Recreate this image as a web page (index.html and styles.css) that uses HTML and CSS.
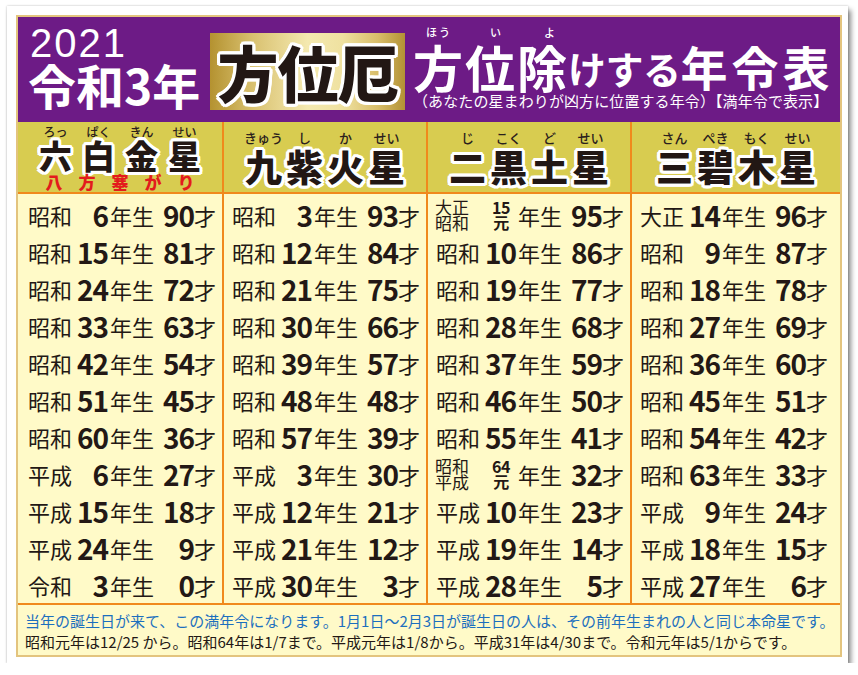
FILE: index.html
```html
<!DOCTYPE html>
<html lang="ja">
<head>
<meta charset="utf-8">
<title>2021 令和3年 方位厄 方位除けする年令表</title>
<link rel="stylesheet" href="styles.css">
</head>
<body>
<div class="card">
  <div class="panel">
    <header class="hd">
      <div class="hd-year">
        <div class="y2021">2021</div>
        <div class="reiwa">令和3年</div>
      </div>
      <div class="gold"><span class="gold-text">方位厄</span></div>
      <div class="hd-title">
        <div class="title-ruby">
          <span class="tr tr1">ほう</span><span class="tr tr2">い</span><span class="tr tr3">よ</span>
        </div>
        <div class="title">
          <span class="t-big">方位除</span><span class="t-kana">けする</span><span class="t-end">年令表</span>
        </div>
        <div class="sub">（あなたの星まわりが凶方に位置する年令）【満年令で表示】</div>
      </div>
    </header>

    <div class="grid">
      <div class="col c1">
        <div class="colhead ch1">
          <div class="name name1">
            <span class="u"><span class="rt">ろっ</span><span class="k">六</span></span>
            <span class="u"><span class="rt">ぱく</span><span class="k">白</span></span>
            <span class="u"><span class="rt">きん</span><span class="k">金</span></span>
            <span class="u"><span class="rt">せい</span><span class="k">星</span></span>
          </div>
          <div class="happo">八方塞がり</div>
        </div>
        <div class="rows">
          <div class="row"><span class="era">昭和</span><span class="num">6</span><span class="nen">年生</span><span class="age">90</span><span class="sai">才</span></div>
          <div class="row"><span class="era">昭和</span><span class="num">15</span><span class="nen">年生</span><span class="age">81</span><span class="sai">才</span></div>
          <div class="row"><span class="era">昭和</span><span class="num">24</span><span class="nen">年生</span><span class="age">72</span><span class="sai">才</span></div>
          <div class="row"><span class="era">昭和</span><span class="num">33</span><span class="nen">年生</span><span class="age">63</span><span class="sai">才</span></div>
          <div class="row"><span class="era">昭和</span><span class="num">42</span><span class="nen">年生</span><span class="age">54</span><span class="sai">才</span></div>
          <div class="row"><span class="era">昭和</span><span class="num">51</span><span class="nen">年生</span><span class="age">45</span><span class="sai">才</span></div>
          <div class="row"><span class="era">昭和</span><span class="num">60</span><span class="nen">年生</span><span class="age">36</span><span class="sai">才</span></div>
          <div class="row"><span class="era">平成</span><span class="num">6</span><span class="nen">年生</span><span class="age">27</span><span class="sai">才</span></div>
          <div class="row"><span class="era">平成</span><span class="num">15</span><span class="nen">年生</span><span class="age">18</span><span class="sai">才</span></div>
          <div class="row"><span class="era">平成</span><span class="num">24</span><span class="nen">年生</span><span class="age">9</span><span class="sai">才</span></div>
          <div class="row"><span class="era">令和</span><span class="num">3</span><span class="nen">年生</span><span class="age">0</span><span class="sai">才</span></div>
        </div>
      </div>

      <div class="col">
        <div class="colhead">
          <div class="name">
            <span class="u"><span class="rt">きゅう</span><span class="k">九</span></span>
            <span class="u"><span class="rt">し</span><span class="k">紫</span></span>
            <span class="u"><span class="rt">か</span><span class="k">火</span></span>
            <span class="u"><span class="rt">せい</span><span class="k">星</span></span>
          </div>
        </div>
        <div class="rows">
          <div class="row"><span class="era">昭和</span><span class="num">3</span><span class="nen">年生</span><span class="age">93</span><span class="sai">才</span></div>
          <div class="row"><span class="era">昭和</span><span class="num">12</span><span class="nen">年生</span><span class="age">84</span><span class="sai">才</span></div>
          <div class="row"><span class="era">昭和</span><span class="num">21</span><span class="nen">年生</span><span class="age">75</span><span class="sai">才</span></div>
          <div class="row"><span class="era">昭和</span><span class="num">30</span><span class="nen">年生</span><span class="age">66</span><span class="sai">才</span></div>
          <div class="row"><span class="era">昭和</span><span class="num">39</span><span class="nen">年生</span><span class="age">57</span><span class="sai">才</span></div>
          <div class="row"><span class="era">昭和</span><span class="num">48</span><span class="nen">年生</span><span class="age">48</span><span class="sai">才</span></div>
          <div class="row"><span class="era">昭和</span><span class="num">57</span><span class="nen">年生</span><span class="age">39</span><span class="sai">才</span></div>
          <div class="row"><span class="era">平成</span><span class="num">3</span><span class="nen">年生</span><span class="age">30</span><span class="sai">才</span></div>
          <div class="row"><span class="era">平成</span><span class="num">12</span><span class="nen">年生</span><span class="age">21</span><span class="sai">才</span></div>
          <div class="row"><span class="era">平成</span><span class="num">21</span><span class="nen">年生</span><span class="age">12</span><span class="sai">才</span></div>
          <div class="row"><span class="era">平成</span><span class="num">30</span><span class="nen">年生</span><span class="age">3</span><span class="sai">才</span></div>
        </div>
      </div>

      <div class="col">
        <div class="colhead">
          <div class="name">
            <span class="u"><span class="rt">じ</span><span class="k">二</span></span>
            <span class="u"><span class="rt">こく</span><span class="k">黒</span></span>
            <span class="u"><span class="rt">ど</span><span class="k">土</span></span>
            <span class="u"><span class="rt">せい</span><span class="k">星</span></span>
          </div>
        </div>
        <div class="rows">
          <div class="row"><span class="era era-stack">大正<br>昭和</span><span class="num num-stack">15<br>元</span><span class="nen">年生</span><span class="age">95</span><span class="sai">才</span></div>
          <div class="row"><span class="era">昭和</span><span class="num">10</span><span class="nen">年生</span><span class="age">86</span><span class="sai">才</span></div>
          <div class="row"><span class="era">昭和</span><span class="num">19</span><span class="nen">年生</span><span class="age">77</span><span class="sai">才</span></div>
          <div class="row"><span class="era">昭和</span><span class="num">28</span><span class="nen">年生</span><span class="age">68</span><span class="sai">才</span></div>
          <div class="row"><span class="era">昭和</span><span class="num">37</span><span class="nen">年生</span><span class="age">59</span><span class="sai">才</span></div>
          <div class="row"><span class="era">昭和</span><span class="num">46</span><span class="nen">年生</span><span class="age">50</span><span class="sai">才</span></div>
          <div class="row"><span class="era">昭和</span><span class="num">55</span><span class="nen">年生</span><span class="age">41</span><span class="sai">才</span></div>
          <div class="row"><span class="era era-stack">昭和<br>平成</span><span class="num num-stack">64<br>元</span><span class="nen">年生</span><span class="age">32</span><span class="sai">才</span></div>
          <div class="row"><span class="era">平成</span><span class="num">10</span><span class="nen">年生</span><span class="age">23</span><span class="sai">才</span></div>
          <div class="row"><span class="era">平成</span><span class="num">19</span><span class="nen">年生</span><span class="age">14</span><span class="sai">才</span></div>
          <div class="row"><span class="era">平成</span><span class="num">28</span><span class="nen">年生</span><span class="age">5</span><span class="sai">才</span></div>
        </div>
      </div>

      <div class="col">
        <div class="colhead">
          <div class="name">
            <span class="u"><span class="rt">さん</span><span class="k">三</span></span>
            <span class="u"><span class="rt">ぺき</span><span class="k">碧</span></span>
            <span class="u"><span class="rt">もく</span><span class="k">木</span></span>
            <span class="u"><span class="rt">せい</span><span class="k">星</span></span>
          </div>
        </div>
        <div class="rows">
          <div class="row"><span class="era">大正</span><span class="num">14</span><span class="nen">年生</span><span class="age">96</span><span class="sai">才</span></div>
          <div class="row"><span class="era">昭和</span><span class="num">9</span><span class="nen">年生</span><span class="age">87</span><span class="sai">才</span></div>
          <div class="row"><span class="era">昭和</span><span class="num">18</span><span class="nen">年生</span><span class="age">78</span><span class="sai">才</span></div>
          <div class="row"><span class="era">昭和</span><span class="num">27</span><span class="nen">年生</span><span class="age">69</span><span class="sai">才</span></div>
          <div class="row"><span class="era">昭和</span><span class="num">36</span><span class="nen">年生</span><span class="age">60</span><span class="sai">才</span></div>
          <div class="row"><span class="era">昭和</span><span class="num">45</span><span class="nen">年生</span><span class="age">51</span><span class="sai">才</span></div>
          <div class="row"><span class="era">昭和</span><span class="num">54</span><span class="nen">年生</span><span class="age">42</span><span class="sai">才</span></div>
          <div class="row"><span class="era">昭和</span><span class="num">63</span><span class="nen">年生</span><span class="age">33</span><span class="sai">才</span></div>
          <div class="row"><span class="era">平成</span><span class="num">9</span><span class="nen">年生</span><span class="age">24</span><span class="sai">才</span></div>
          <div class="row"><span class="era">平成</span><span class="num">18</span><span class="nen">年生</span><span class="age">15</span><span class="sai">才</span></div>
          <div class="row"><span class="era">平成</span><span class="num">27</span><span class="nen">年生</span><span class="age">6</span><span class="sai">才</span></div>
        </div>
      </div>
    </div>

    <footer class="ft">
      <div class="ft-blue">当年の誕生日が来て、この満年令になります。1月1日～2月3日が誕生日の人は、その前年生まれの人と同じ本命星です。</div>
      <div class="ft-dark">昭和元年は12/25 から。昭和64年は1/7まで。平成元年は1/8から。平成31年は4/30まで。令和元年は5/1からです。</div>
    </footer>
  </div>
</div>
</body>
</html>
```

FILE: styles.css
```css
* { box-sizing: border-box; }

html, body {
  margin: 0;
  padding: 0;
  background: #ffffff;
}

body {
  font-family: "Noto Sans CJK JP", "Noto Sans", sans-serif;
  color: #231815;
}

.card {
  width: 841px;
  height: 657px;
  margin: 6px 0 0 7px;
  padding: 9px 6px 6px 9px;
  background: #ffffff;
  box-shadow: 0 0 2px rgba(0, 0, 0, 0.25), 3px 4px 5px rgba(0, 0, 0, 0.45);
}

.panel {
  width: 826px;
  height: 642px;
  border: 2px solid #e3c47e;
  display: flex;
  flex-direction: column;
  background: #fffac8;
}

/* ---------- header ---------- */
.hd {
  height: 105px;
  flex: none;
  background: #6d1b86;
  display: flex;
  padding-left: 12px;
  color: #ffffff;
}

.hd-year {
  display: flex;
  flex-direction: column;
  padding-top: 6px;
  width: 175px;
}

.y2021 {
  font-family: "Liberation Sans", Arial, sans-serif;
  font-size: 40px;
  line-height: 40px;
  letter-spacing: 2px;
}

.reiwa {
  font-size: 48px;
  line-height: 48px;
  font-weight: 700;
  letter-spacing: 0;
  margin-left: -2px;
  margin-top: -3px;
  white-space: nowrap;
}

.gold {
  width: 195px;
  height: 77px;
  margin-top: 16px;
  margin-left: 5px;
  background: linear-gradient(90deg, #b49230 0%, #d9c170 22%, #f4e9b0 50%, #efe1a0 68%, #d8bd6a 86%, #b39234 100%);
  display: flex;
  align-items: center;
  justify-content: center;
}

.gold-text {
  font-size: 61px;
  line-height: 77px;
  font-weight: 900;
  color: #221714;
  letter-spacing: -1px;
  white-space: nowrap;
  text-shadow:
    3px 0 0 #fff, -3px 0 0 #fff, 0 3px 0 #fff, 0 -3px 0 #fff,
    2px 2px 0 #fff, -2px 2px 0 #fff, 2px -2px 0 #fff, -2px -2px 0 #fff,
    3px 1.5px 0 #fff, -3px 1.5px 0 #fff, 3px -1.5px 0 #fff, -3px -1.5px 0 #fff,
    1.5px 3px 0 #fff, -1.5px 3px 0 #fff, 1.5px -3px 0 #fff, -1.5px -3px 0 #fff;
}

.hd-title {
  margin-left: 8px;
  padding-top: 9px;
  display: flex;
  flex-direction: column;
}

.title-ruby {
  display: flex;
  height: 13px;
  font-size: 11px;
  line-height: 12px;
  font-weight: 500;
  white-space: nowrap;
}

.tr { letter-spacing: 2px; }
.tr1 { margin-left: 13px; }
.tr2 { margin-left: 38px; }
.tr3 { margin-left: 41px; }

.title {
  display: flex;
  align-items: center;
  height: 54px;
  font-weight: 700;
  white-space: nowrap;
  line-height: 54px;
}

.t-big {
  font-size: 50px;
  letter-spacing: 2px;
}

.t-kana {
  font-size: 38px;
  letter-spacing: -0.5px;
  margin-left: -1px;
  padding-top: 4px;
}

.t-end {
  font-size: 47px;
  letter-spacing: 4px;
  margin-left: 0;
}

.sub {
  font-size: 15px;
  line-height: 18px;
  margin-top: -1px;
  white-space: nowrap;
  letter-spacing: 0.1px;
}

/* ---------- grid ---------- */
.grid {
  display: grid;
  grid-template-columns: 204px 204px 204px 1fr;
  flex: none;
  height: 481px;
}

.col {
  display: flex;
  flex-direction: column;
  border-left: 2px solid #f0891c;
  min-width: 0;
}

.col.c1 {
  border-left: none;
}

.colhead {
  height: 72px;
  background: #d8cc50;
  border-bottom: 2px solid #f0891c;
  display: flex;
  flex-direction: column;
  align-items: center;
  padding-top: 8px;
}

.ch1 {
  padding-top: 4px;
}

.name {
  display: flex;
  gap: 4px;
}

.u {
  width: 37px;
  display: flex;
  flex-direction: column;
  align-items: center;
}

.rt {
  font-size: 13px;
  line-height: 16px;
  font-weight: 500;
  letter-spacing: 0;
  white-space: nowrap;
  color: #2a201c;
}

.k {
  font-size: 37px;
  line-height: 40px;
  font-weight: 900;
  color: #221714;
  text-shadow:
    3px 0 0 #fff, -3px 0 0 #fff, 0 3px 0 #fff, 0 -3px 0 #fff,
    2px 2px 0 #fff, -2px 2px 0 #fff, 2px -2px 0 #fff, -2px -2px 0 #fff,
    3px 1.5px 0 #fff, -3px 1.5px 0 #fff, 3px -1.5px 0 #fff, -3px -1.5px 0 #fff,
    1.5px 3px 0 #fff, -1.5px 3px 0 #fff, 1.5px -3px 0 #fff, -1.5px -3px 0 #fff;
}

.name1 {
  gap: 10px;
}

.name1 .u {
  width: 33px;
}

.name1 .rt {
  font-size: 12px;
  line-height: 12px;
}

.name1 .k {
  font-size: 33px;
  line-height: 35px;
}

.happo {
  font-size: 17px;
  line-height: 18px;
  font-weight: 900;
  color: #e31b1c;
  letter-spacing: 16px;
  padding-left: 16px;
  white-space: nowrap;
}

/* ---------- rows ---------- */
.rows {
  padding-top: 2px;
  display: flex;
  flex-direction: column;
  padding-left: 8px;
}

.c1 .rows {
  padding-left: 10px;
}

.row {
  height: 37px;
  display: grid;
  grid-template-columns: 44px 36px 46px 40px 22px;
  align-items: center;
  white-space: nowrap;
}

.era {
  font-size: 22px;
  line-height: 24px;
  font-weight: 400;
}

.era-stack {
  font-size: 17px;
  line-height: 16px;
  margin-left: -1px;
}

.num, .age {
  font-size: 28px;
  line-height: 30px;
  font-weight: 700;
  text-align: right;
  letter-spacing: -1px;
}

.num-stack {
  font-size: 16px;
  line-height: 15px;
  text-align: center;
  letter-spacing: -0.5px;
  padding-left: 6px;
}

.nen {
  font-size: 22px;
  line-height: 24px;
  padding-left: 2px;
}

.sai {
  font-size: 22px;
  line-height: 24px;
}

/* ---------- footer ---------- */
.ft {
  flex: 1;
  border-top: 2px solid #f0891c;
  padding: 5px 0 0 7px;
  font-size: 15px;
  line-height: 21px;
  white-space: nowrap;
}

.ft-blue {
  color: #1c6fbe;
}

.ft-dark {
  color: #231815;
}
```
